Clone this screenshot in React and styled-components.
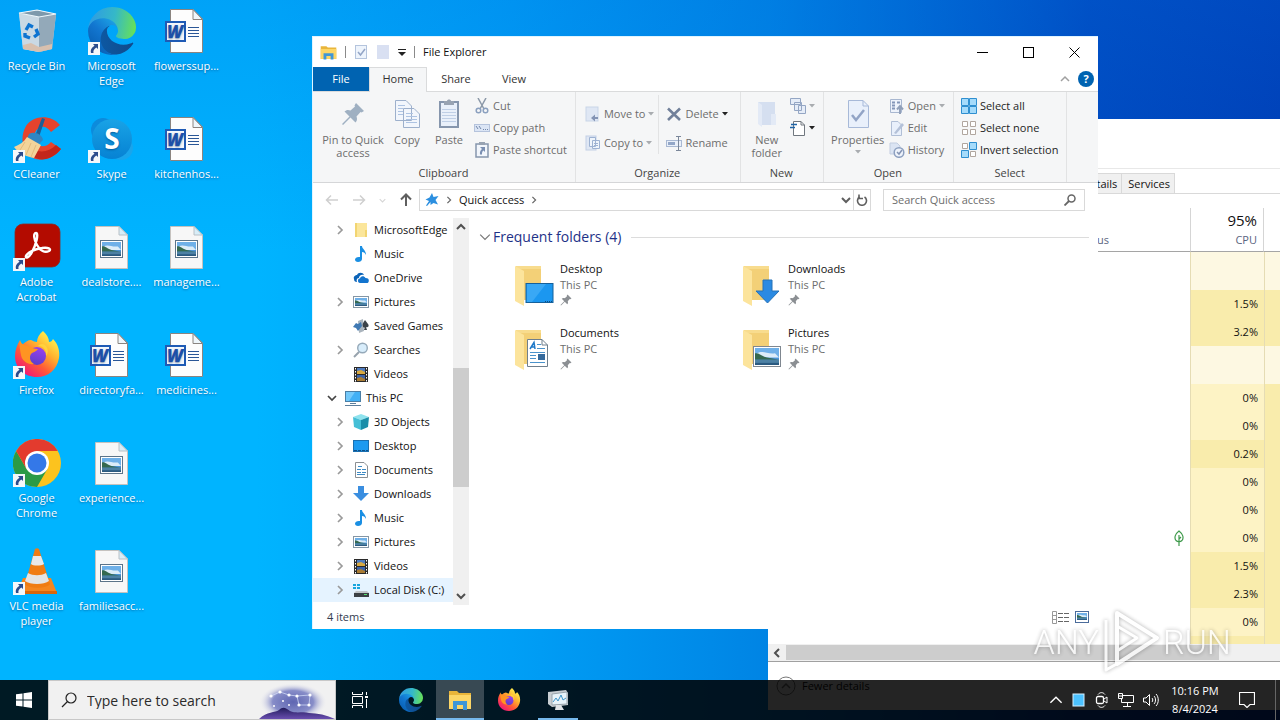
import { useState } from "react";
import styled, { createGlobalStyle } from "styled-components";

/* ---------- drawings ---------- */

const EdgeIcon = ({ size = 48 }) => (
  <svg width={size} height={size} viewBox="0 0 256 256">
    <defs>
      <linearGradient id="edgeA" x1="60" y1="177" x2="241" y2="177" gradientUnits="userSpaceOnUse">
        <stop offset="0" stopColor="#0c59a4" />
        <stop offset="1" stopColor="#114a8b" />
      </linearGradient>
      <linearGradient id="edgeB" x1="157" y1="100" x2="46" y2="222" gradientUnits="userSpaceOnUse">
        <stop offset="0" stopColor="#1b9de2" />
        <stop offset="0.5" stopColor="#1276d0" />
        <stop offset="1" stopColor="#0a63b8" />
      </linearGradient>
      <linearGradient id="edgeC" x1="20" y1="70" x2="250" y2="110" gradientUnits="userSpaceOnUse">
        <stop offset="0" stopColor="#2f9fe0" />
        <stop offset="0.5" stopColor="#35b8c8" />
        <stop offset="1" stopColor="#66e05a" />
      </linearGradient>
    </defs>
    <path
      fill="url(#edgeA)"
      d="M235.68 190.46a93.73 93.73 0 0 1-10.54 4.71 101.87 101.87 0 0 1-35.9 6.46c-47.32 0-88.54-32.55-88.54-74.32A31.48 31.48 0 0 1 117.13 99.8c-42.8 1.8-53.8 46.4-53.8 72.53 0 73.88 68.09 81.37 82.76 81.37 7.91 0 19.84-2.3 27-4.56l1.31-.44a128.34 128.34 0 0 0 66.6-52.8 4 4 0 0 0-5.32-5.44z"
    />
    <path
      fill="url(#edgeB)"
      d="M105.73 241.42a79.2 79.2 0 0 1-22.74-21.34 80.72 80.72 0 0 1 29.53-120c3.12-1.47 8.45-4.13 15.54-4a32.35 32.35 0 0 1 25.69 13 31.88 31.88 0 0 1 6.36 18.66c0-.21 24.46-79.6-80-79.6-43.9 0-80 41.66-80 78.21a130.15 130.15 0 0 0 12.11 56 128 128 0 0 0 156.38 67.11 75.55 75.55 0 0 1-62.78-8z"
    />
    <path
      fill="url(#edgeC)"
      d="M152.33 148.86c-.81 1.05-3.3 2.5-3.3 5.66 0 2.61 1.7 5.12 4.72 7.23 14.38 10 41.49 8.68 41.56 8.68a59.56 59.56 0 0 0 30.27-8.35A61.38 61.38 0 0 0 256 109.19c.26-22.41-8-37.31-11.34-43.91C223.46 23.84 177.72 0 128 0A128 128 0 0 0 0 126.2c.48-36.54 36.8-66.05 80-66.05 3.5 0 23.46.34 42 10.07 16.34 8.58 24.9 18.94 30.85 29.21 6.18 10.67 7.28 24.15 7.28 29.52s-2.74 13.33-7.8 19.91z"
    />
  </svg>
);

const RecycleIcon = () => (
  <svg width="48" height="48" viewBox="0 0 48 48">
    <path d="M6 6 L24 3 L43 7 L39 42 L26 45 L10 42 Z" fill="#b9cfdd" />
    <path d="M6 6 L26 10 L26 45 L10 42 Z" fill="#c9d9e4" />
    <path d="M26 10 L43 7 L39 42 L26 45 Z" fill="#93a9b9" />
    <path d="M6 6 L24 3 L43 7 L26 10 Z" fill="#7d99ac" stroke="#eef7fc" strokeWidth="1.2" />
    <path d="M10 38 L18 36 L26 40 L39 37 L39 42 L26 45 L10 42 Z" fill="#d8c0ae" />
    <g fill="none" stroke="#0d74d1" strokeWidth="3.4">
      <path d="M13 23 L16 18 L20 20" />
      <path d="M23 22 L25 27 L21 30" />
      <path d="M17 31 L12 29 L12 26" />
    </g>
  </svg>
);

const CCleanerIcon = () => (
  <svg width="48" height="48" viewBox="0 0 48 48">
    <path
      d="M47 10 C38 -1 20 0 13 11 C6 23 10 38 20 43 C30 47 41 43 48 34 L38 27 C34 32 27 33 23 28 C19 22 22 14 28 12 C32 11 35 13 38 17 Z"
      fill="#e5432d"
    />
    <path d="M13 30 C16 41 24 46 33 44 C40 42 45 38 48 34 L43 30 C35 38 24 39 13 30 Z" fill="#c3261b" />
    <path d="M29 3 L32 4 L26 22 L22 21 Z" fill="#1d5f97" />
    <path d="M16 19 C21 16 29 19 30 25 L26 29 L14 24 Z" fill="#2f86c4" />
    <path d="M14 22 L28 30 L21 43 C15 42 6 39 1 32 C6 30 11 27 14 22 Z" fill="#f3d49a" />
    <path d="M12 27 L7 35 M18 28 L13 40 M23 30 L18 42" stroke="#e3bb7c" strokeWidth="1" />
  </svg>
);

const SkypeIcon = () => (
  <svg width="48" height="48" viewBox="0 0 48 48">
    <defs>
      <linearGradient id="skypeG" x1="0" y1="0" x2="0" y2="1">
        <stop offset="0" stopColor="#19a3e6" />
        <stop offset="1" stopColor="#0682d3" />
      </linearGradient>
    </defs>
    <circle cx="15" cy="15" r="12" fill="#0c8bdc" />
    <circle cx="33" cy="33" r="12" fill="#19a5ec" />
    <circle cx="24" cy="24" r="20" fill="url(#skypeG)" />
    <text x="24" y="34" textAnchor="middle" fontFamily="Open Sans" fontWeight="700" fontSize="28" fill="#fff">
      S
    </text>
  </svg>
);

const AcrobatIcon = () => (
  <svg width="48" height="48" viewBox="0 0 48 48">
    <rect x="2" y="1" width="45" height="43" rx="8" fill="#b30b00" stroke="#8a2a25" strokeWidth="0.8" />
    <path
      d="M23 10 C20 10 21 17 24 22 C27 28 32 30 36 28 C39 26 35 24 29 25 C21 26 14 30 13 33 C12 36 16 35 19 29 C23 22 26 10 23 10 Z"
      fill="none"
      stroke="#fff"
      strokeWidth="2.4"
      strokeLinejoin="round"
    />
  </svg>
);

const FirefoxIcon = ({ size = 48, id = "a" }) => (
  <svg width={size} height={size} viewBox="0 0 48 48">
    <defs>
      <linearGradient id={"ffBody" + id} x1="0.85" y1="0.1" x2="0.2" y2="0.95">
        <stop offset="0" stopColor="#fff44f" />
        <stop offset="0.35" stopColor="#ffb02e" />
        <stop offset="0.65" stopColor="#ff5a36" />
        <stop offset="1" stopColor="#f0157a" />
      </linearGradient>
      <linearGradient id={"ffCore" + id} x1="0.6" y1="0" x2="0.3" y2="1">
        <stop offset="0" stopColor="#9a3ff0" />
        <stop offset="1" stopColor="#5a3ec8" />
      </linearGradient>
    </defs>
    <path
      d="M30 0 C34 4 36 7 36 11 C38 11 39 10 40 8 C45 13 47 20 46 27 C44 39 35 46 24 46 C11 46 2 37 2 25 C2 19 4 14 7 9 C7 12 8 13 9 14 C12 11 15 9 18 9 C20 10 22 11 24 11 C24 7 26 3 30 0 Z"
      fill={`url(#ffBody${id})`}
    />
    <circle cx="24" cy="25" r="9" fill={`url(#ffCore${id})`} />
    <path
      d="M7 9 C8 13 11 14 15 15 C18 16 21 18 25 18 C23 21 20 21 18 23 C16 26 17 31 21 33 C15 34 9 30 8 24 C7 19 6 14 7 9 Z"
      fill="#ff9422"
    />
    <path d="M25 15 C31 15 34 20 33 25 C36 22 35 16 32 14 C29 12 27 13 25 15 Z" fill="#ffd23c" />
  </svg>
);

const ChromeIcon = () => (
  <svg width="48" height="48" viewBox="0 0 48 48">
    <circle cx="24" cy="24" r="24" fill="#fcc31e" />
    <path d="M3.2 12 L13.6 30 L24 36 L34.4 30 L24 48 A24 24 0 0 1 3.2 12 Z" fill="#2b9a47" />
    <path d="M3.2 12 A24 24 0 0 1 44.8 12 L24 12 L13.6 30 Z" fill="#e33b2e" />
    <circle cx="24" cy="24" r="12" fill="#fff" />
    <circle cx="24" cy="24" r="9.5" fill="#3478e8" />
  </svg>
);

const VlcIcon = () => (
  <svg width="48" height="48" viewBox="0 0 48 48">
    <path d="M10 31 L38 31 L44 46 L4 46 Z" fill="#f5861f" />
    <path d="M4 44 L44 44 L44 47 L4 47 Z" fill="#d9660a" />
    <path d="M22 2 C23 1 25 1 26 2 L37 37 C34 42 15 42 12 37 Z" fill="#f07c13" />
    <path d="M20 9 L28 9 L31 17 C28 19 20 19 18 17 Z" fill="#e9e9e9" />
    <path d="M15 26 C20 29 28 29 33 26 L36 34 C31 38 17 38 12 34 Z" fill="#e4e4e4" />
  </svg>
);

const WordFileIcon = () => (
  <svg width="48" height="48" viewBox="2 0 48 48">
    <path d="M9.5 2.5 H32 L41.5 12 V45.5 H9.5 Z" fill="#fdfdfd" stroke="#8a8480" />
    <path d="M32 2.5 V12.5 H41.5 Z" fill="#eef6fb" stroke="#8a8480" />
    <path d="M27 20.5 H38 M27 23.5 H38 M27 26.5 H38 M27 29.5 H38" stroke="#2b5797" />
    <rect x="4" y="14" width="21" height="21" fill="#1f5bb5" />
    <rect x="6" y="16" width="17" height="17" fill="#f3f7fc" />
    <text
      x="14"
      y="31"
      textAnchor="middle"
      fontFamily="Open Sans"
      fontStyle="italic"
      fontWeight="800"
      fontSize="17"
      fill="#1d4fa8"
    >
      W
    </text>
  </svg>
);

const Scene = ({ x, y, w, h }) => (
  <svg x={x} y={y} width={w} height={h} viewBox="0 0 24 16" preserveAspectRatio="none">
    <rect width="24" height="16" fill="#4b93d8" />
    <path d="M0 0 H24 V9 H0 Z" fill="#6fb0e8" />
    <path d="M2 5 C8 2 12 6 20 5 L24 9 H0 Z" fill="#dcecf8" />
    <path d="M0 5 C4 4 7 8 12 9 L24 11 H0 Z" fill="#35694f" />
    <path d="M0 11 H24 V16 H0 Z" fill="#4d81a4" />
    <path d="M0 14 H24 V16 H0 Z" fill="#2b5a80" />
  </svg>
);

const ImageFileIcon = () => (
  <svg width="48" height="48" viewBox="2 0 48 48">
    <path d="M9.5 3.5 H33 L41.5 12 V45.5 H9.5 Z" fill="#f7f7f7" stroke="#c5c2bf" />
    <path d="M33 3.5 V12 H41.5 Z" fill="#d8edf7" stroke="#b9c0c6" />
    <rect x="14.5" y="17.5" width="22" height="17" fill="#fff" stroke="#5c7489" />
    <Scene x="16" y="19" w="19" h="14" />
  </svg>
);

const ShortcutArrow = () => (
  <svg width="12" height="13" viewBox="0 0 12 13">
    <rect width="12" height="13" fill="#f4f7fa" />
    <path d="M5 2 H10 V7 L8.3 5.5 C6 7 5 8.5 5.5 11 H3 C2 8 3.5 5.5 6.5 3.7 Z" fill="#2c4c8c" />
  </svg>
);

const PictureGlyph = () => (
  <svg width="16" height="16" viewBox="0 0 16 16">
    <rect x="0.5" y="2.5" width="15" height="11" fill="#fff" stroke="#8496a5" />
    <Scene x="2" y="4" w="12" h="8" />
  </svg>
);

const treeGlyphs = {
  folder: (
    <svg width="16" height="16" viewBox="0 0 16 16">
      <path d="M2 1 H14 V15 H2 Z" fill="#fbe69b" />
      <path d="M2 1 H4 V15 H2 Z M12 8 H14 V15 H12 Z" fill="#f2d572" />
    </svg>
  ),
  music: (
    <svg width="16" height="16" viewBox="0 0 16 16">
      <path d="M7 0 H9 C9 3 13 4 13 9 C12 7 11 6 9 6 V13 C9 15 7 16 5 16 C3 16 2 15 2 13.5 C2 12 4 10.5 7 11 Z" fill="#1a8fe3" />
    </svg>
  ),
  onedrive: (
    <svg width="16" height="16" viewBox="0 0 16 16">
      <path d="M1 9 C0 6 3 5 4 5 C5 2 10 2 11 5 C8 4 6 6 6 8 C4 8 3 10 4 12 C2 12 1 11 1 9 Z" fill="#0b63b8" />
      <path d="M5 10.5 C5 9 6 8.5 7 8.5 C7 6 11 5 12.5 8 C15 8 16 9 15.8 11 C15.5 12.5 15 13 14 13 H7 C5.5 13 5 12 5 10.5 Z" fill="#1374ce" />
    </svg>
  ),
  pictures: <PictureGlyph />,
  games: (
    <svg width="16" height="16" viewBox="0 0 16 16">
      <path d="M5 3 L10 1 L11 13 L6 15 Z" fill="#aab4bd" />
      <path d="M12 2 C10 5 9 6 10 9 C11 10 12 10 12 9 L11 12 H14 L13 9 C16 10 16 7 15 6 Z" fill="#3b4249" />
      <path d="M0 9 L3 5 L5 6 L8 4 L9 8 L5 13 L3 10 Z" fill="#4079b3" />
    </svg>
  ),
  search: (
    <svg width="16" height="16" viewBox="0 0 16 16">
      <path d="M6 10 L1 15" stroke="#98a3ad" strokeWidth="2" />
      <circle cx="9.5" cy="6" r="4.8" fill="#d8edfb" stroke="#95a9b9" strokeWidth="1.4" />
    </svg>
  ),
  videos: (
    <svg width="16" height="16" viewBox="0 0 16 16">
      <rect x="1" y="1" width="14" height="15" fill="#2a2a2a" />
      <rect x="4" y="2" width="8" height="6" fill="#4f7cc0" />
      <path d="M4 5 L8 4 L12 6 V8 H4 Z" fill="#d8a941" />
      <rect x="4" y="9" width="8" height="6" fill="#3b62a8" />
      <path d="M4 12 L8 11 L12 13 V15 H4 Z" fill="#a97c34" />
      <path d="M2.5 2 V16 M13.5 2 V16" stroke="#fff" strokeDasharray="1.5 1.5" />
    </svg>
  ),
  pc: (
    <svg width="16" height="16" viewBox="0 0 16 16">
      <rect x="0.5" y="1.5" width="15" height="10" fill="#42b0f5" stroke="#4a7ea5" />
      <path d="M1 2 H10 L4 11 H1 Z" fill="#74c9fa" />
      <path d="M5 13.5 H11 M0 15.5 H16" stroke="#5d7f9c" />
    </svg>
  ),
  cube: (
    <svg width="16" height="16" viewBox="0 0 16 16">
      <path d="M0 3 L8 0 L16 3 L8 6 Z" fill="#8fe3ee" />
      <path d="M0 3 L8 6 V16 L1 13 Z" fill="#45bfd6" />
      <path d="M16 3 L8 6 V16 L15 13 Z" fill="#1a8ea9" />
    </svg>
  ),
  desktop: (
    <svg width="16" height="16" viewBox="0 0 16 16">
      <rect x="0.5" y="2.5" width="15" height="11" fill="#1d9af0" stroke="#1a6fb0" />
      <path d="M1 12.5 H15" stroke="#0f4f86" strokeDasharray="3 1" />
    </svg>
  ),
  document: (
    <svg width="16" height="16" viewBox="0 0 16 16">
      <path d="M2.5 0.5 H11 L14.5 4 V15.5 H2.5 Z" fill="#fff" stroke="#8b8f93" />
      <path d="M5 4.5 H9 M4 7.5 H8 M9 7.5 H13 M4 10.5 H8 M9 10.5 H13 M4 12.5 H12" stroke="#3d8ac4" />
    </svg>
  ),
  download: (
    <svg width="16" height="16" viewBox="0 0 16 16">
      <path d="M5 0 H11 V7 H16 L8 15 L0 7 H5 Z" fill="#3a8ee0" />
    </svg>
  ),
  disk: (
    <svg width="16" height="16" viewBox="0 0 16 16">
      <path d="M0 2 H3 V4 H0 Z M4 2 H7 V4 H4 Z M0 5 H3 V7 H0 Z M4 5 H7 V7 H4 Z" fill="#18a5dd" />
      <path d="M3 9 H14 L16 11 H1 Z" fill="#c0c5c9" />
      <rect x="1" y="11" width="15" height="4" fill="#3c4145" />
      <rect x="11" y="12" width="3" height="1" fill="#58e070" />
    </svg>
  ),
};

const PinGlyph = ({ size = 12, color = "#8b8f93" }) => (
  <svg width={size} height={size} viewBox="0 0 24 24">
    <path
      d="M15 1 L23 9 L20.5 10.5 L19.5 10 L15.5 14.5 C16.5 17 16 19 14.5 20.5 L9.5 15.5 L2 23 L1 22 L8.5 14.5 L3.5 9.5 C5 8 7 7.5 9.5 8.5 L14 4.5 L13.5 3.5 Z"
      fill={color}
    />
  </svg>
);

const BigFolder = ({ kind }) => (
  <svg width="40" height="40" viewBox="0 0 40 40">
    <path d="M2 0 H27 V34 H10 Z" fill="#f3d077" />
    <path d="M2 0 H27 V3 H4 Z" fill="#f8dc8e" />
    <path d="M1 0 L10 5 V40 L1 35 Z" fill="#fce49c" />
    {kind === "desktop" && (
      <>
        <rect x="12" y="17.5" width="27" height="19" fill="#1b97f0" stroke="#15609b" />
        <path d="M13 18 H32 L18 36 H13 Z" fill="#39a8f5" />
        <path d="M31 35.5 H38" stroke="#0d4c82" strokeDasharray="1 1" />
      </>
    )}
    {kind === "download" && <path d="M21 14 H30 V25 H37 L25.5 37 L14 25 H21 Z" fill="#2b8ae2" stroke="#2672b8" />}
    {kind === "document" && (
      <>
        <path d="M13.5 9.5 H28 L33.5 15 V36.5 H13.5 Z" fill="#fff" stroke="#6f7f8c" />
        <path d="M28 9.5 V15 H33.5" fill="none" stroke="#6f7f8c" />
        <path d="M16 19 L20 12.5 L21 19 M17 17 H21" fill="none" stroke="#1e78c8" strokeWidth="1.5" />
        <path d="M23 14.5 H27 M23 18.5 H31 M16 22.5 H31 M16 25.5 H22 M16 28.5 H22 M16 32.5 H31" stroke="#4a93cc" />
        <rect x="24" y="24" width="7" height="6" fill="#356a9c" />
      </>
    )}
    {kind === "pictures" && (
      <>
        <rect x="11.5" y="16.5" width="27" height="20" fill="#fff" stroke="#7f8790" />
        <Scene x="13" y="18" w="24" h="17" />
      </>
    )}
  </svg>
);

const ExplorerIcon = ({ size }) => (
  <svg width={size} height={size} viewBox="0 0 24 24">
    <path d="M1 3 H9 L11 5 H23 V21 H1 Z" fill="#e9b53a" />
    <path d="M1 7 H23 V21 H1 Z" fill="#fcd667" />
    <path d="M5 13 H19 V22 H15 V17 H9 V22 H5 Z" fill="#3f96d6" />
  </svg>
);

/* ribbon drawings are washed out since most commands are off */
const ribbonGlyphs = {
  pin: <PinGlyph size={24} color="#9fb0c2" />,
  copy: (
    <svg width="26" height="30" viewBox="0 0 26 30">
      <path d="M1.5 1.5 H12 L17.5 7 V21.5 H1.5 Z M9.5 9.5 H20 L25.5 15 V28.5 H9.5 Z" fill="#f2f6fc" stroke="#9db0cc" />
      <path d="M4 6.5 H11 M4 9.5 H9 M4 12.5 H9 M4 15.5 H9 M12 14.5 H19 M12 17.5 H23 M12 20.5 H23 M12 23.5 H23" stroke="#adc3e2" />
    </svg>
  ),
  paste: (
    <svg width="24" height="30" viewBox="0 0 24 30">
      <rect x="3" y="3" width="18" height="25" fill="#e9f0fa" stroke="#8696ad" strokeWidth="2" />
      <path d="M7 2 H10 C10 0 14 0 14 2 H17 V6 H7 Z" fill="#98a3b2" />
      <path d="M5 10.5 H19 M5 13.5 H19 M5 16.5 H19 M5 19.5 H19 M5 22.5 H19" stroke="#bfcfe6" />
    </svg>
  ),
  cut: (
    <svg width="16" height="16" viewBox="0 0 16 16">
      <path d="M4 0 L10 11 M12 0 L6 11" stroke="#8b98a8" strokeWidth="1.5" />
      <circle cx="4.5" cy="12.5" r="2.3" fill="none" stroke="#8ba0bf" strokeWidth="1.5" />
      <circle cx="11.5" cy="12.5" r="2.3" fill="none" stroke="#8ba0bf" strokeWidth="1.5" />
    </svg>
  ),
  path: (
    <svg width="16" height="16" viewBox="0 0 16 16">
      <rect x="0.5" y="4.5" width="15" height="7" fill="#dbe5f5" stroke="#b5c3dc" />
      <path d="M2 6 L4 9 M5 6 L7 9" stroke="#7387ab" />
      <path d="M9 9.5 H14" stroke="#7387ab" strokeDasharray="1 1" />
    </svg>
  ),
  shortcut: (
    <svg width="16" height="16" viewBox="0 0 16 16">
      <rect x="2" y="2" width="12" height="13" fill="#f2f6fc" stroke="#8696ad" strokeWidth="1.5" />
      <rect x="5" y="0" width="6" height="3" fill="#98a3b2" />
      <path d="M6 5 H11 V10 L9.5 8.5 C8 9.5 8 11 8 12.5 H6 C5.5 10 6.5 8 8 7 Z" fill="#7a8fb2" />
    </svg>
  ),
  moveTo: (
    <svg width="16" height="16" viewBox="0 0 16 16">
      <rect x="1" y="1" width="12" height="14" fill="#dfe7f4" stroke="#c9d5e8" />
      <path d="M6 12 L10 8.5 V11 H13 V13 H10 V15.5 Z" fill="#8494b4" />
    </svg>
  ),
  copyTo: (
    <svg width="16" height="16" viewBox="0 0 16 16">
      <rect x="1" y="1" width="10" height="14" fill="#dfe7f4" stroke="#c3d0e5" />
      <path d="M4.5 2.5 H10.5 V11.5 H4.5 Z M7.5 5.5 H14.5 V13.5 H7.5 Z" fill="#eef4fb" stroke="#9db2d2" />
      <path d="M9 8.5 H13 M9 10.5 H13" stroke="#9db2d2" />
    </svg>
  ),
  delete: (
    <svg width="16" height="16" viewBox="0 0 16 16">
      <path d="M2 2.5 L14 14 M14 2.5 L2 14" stroke="#71809a" strokeWidth="2.6" />
    </svg>
  ),
  rename: (
    <svg width="16" height="16" viewBox="0 0 16 16">
      <rect x="0.5" y="5.5" width="15" height="6" fill="#eaf0fa" stroke="#a9b9d3" />
      <rect x="2" y="7" width="7" height="3" fill="#93a7c8" />
      <path d="M10 1.5 H15 M10 15.5 H15 M12.5 1.5 V15.5" stroke="#7b879a" />
    </svg>
  ),
  newFolder: (
    <svg width="24" height="30" viewBox="0 0 24 30">
      <path d="M3 3 H20 V26 H7 Z" fill="#d5dff0" />
      <path d="M3 3 L7 6 V28 L3 25 Z" fill="#e3eaf6" />
      <path d="M16 15 H21 V26 H16 Z" fill="#e3eaf6" />
    </svg>
  ),
  newItem: (
    <svg width="16" height="16" viewBox="0 0 16 16">
      <path d="M0.5 0.5 H10.5 V6.5 H0.5 Z M4.5 4.5 H11.5 V12.5 H4.5 Z M8.5 7.5 H15.5 V15.5 H8.5 Z" fill="#e6edf8" stroke="#94a6c4" />
    </svg>
  ),
  easy: (
    <svg width="16" height="16" viewBox="0 0 16 16">
      <path d="M3.5 1.5 H11 L14.5 5 V15.5 H3.5 Z" fill="#fff" stroke="#70777f" />
      <path d="M11 1.5 V5 H14.5" fill="none" stroke="#70777f" />
      <path d="M1 4.5 H7 M0 7.5 H5" stroke="#2066a8" strokeWidth="1.5" />
    </svg>
  ),
  properties: (
    <svg width="24" height="30" viewBox="0 0 24 30">
      <path d="M2.5 1.5 H17 L22.5 7 V28.5 H2.5 Z" fill="#e9f0fb" stroke="#a7b9d8" />
      <path d="M17 1.5 V7 H22.5" fill="none" stroke="#a7b9d8" />
      <path d="M6 16 L10 21 L18 11" fill="none" stroke="#92a4c6" strokeWidth="2.5" />
    </svg>
  ),
  open: (
    <svg width="16" height="16" viewBox="0 0 16 16">
      <path d="M1.5 1.5 H12.5 V14.5 H1.5 Z" fill="#eef3fb" stroke="#a8b7d0" />
      <path d="M3 4.5 H6 M3 7.5 H6 M3 10.5 H6 M8 4.5 H11" stroke="#8396b8" strokeWidth="2" />
      <path d="M11 16 V9 M8 11.5 L11 8 L14 11.5" fill="none" stroke="#91a0b9" strokeWidth="2" />
    </svg>
  ),
  edit: (
    <svg width="16" height="16" viewBox="0 0 16 16">
      <path d="M2.5 1.5 H9 L12.5 5 V15.5 H2.5 Z" fill="#e9f0fb" stroke="#b1bfd6" />
      <path d="M5 13 L13 3 L15 5 L7 14 Z" fill="#b4c1d8" />
    </svg>
  ),
  history: (
    <svg width="16" height="16" viewBox="0 0 16 16">
      <path d="M1 1 H8 L11 4 V12 H1 Z" fill="#dbe4f3" stroke="#c2cde0" />
      <circle cx="10" cy="10.5" r="4.8" fill="#eef3fb" stroke="#8da0c0" strokeWidth="1.5" />
      <path d="M8 10 L10 12 L13 8" fill="none" stroke="#8494b4" strokeWidth="1.5" />
    </svg>
  ),
  all: (
    <svg width="16" height="16" viewBox="0 0 16 16">
      <path d="M0.5 0.5 H7.5 V7.5 H0.5 Z M8.5 0.5 H15.5 V7.5 H8.5 Z M0.5 8.5 H7.5 V15.5 H0.5 Z M8.5 8.5 H15.5 V15.5 H8.5 Z" fill="#a5dbfb" stroke="#2f8fd0" />
    </svg>
  ),
  none: (
    <svg width="16" height="16" viewBox="0 0 16 16">
      <path d="M1.5 1.5 H6.5 V6.5 H1.5 Z M9.5 1.5 H14.5 V6.5 H9.5 Z M1.5 9.5 H6.5 V14.5 H1.5 Z M9.5 9.5 H14.5 V14.5 H9.5 Z" fill="#fff" stroke="#b0a69f" />
    </svg>
  ),
  invert: (
    <svg width="16" height="16" viewBox="0 0 16 16">
      <path d="M1.5 1.5 H6.5 V6.5 H1.5 Z M9.5 9.5 H14.5 V14.5 H9.5 Z" fill="#fff" stroke="#b0a69f" />
      <path d="M8.5 0.5 H15.5 V7.5 H8.5 Z M0.5 8.5 H7.5 V15.5 H0.5 Z" fill="#a5dbfb" stroke="#2f8fd0" />
    </svg>
  ),
};

const Chevron = ({ dir = "right", color = "#8c8c8c", size = 10, weight = 1.5 }) => {
  const paths = {
    right: "M3 1 L7 5 L3 9",
    down: "M1 3 L5 7 L9 3",
    up: "M1 7 L5 3 L9 7",
    left: "M7 1 L3 5 L7 9",
  };
  return (
    <svg width={size} height={size} viewBox="0 0 10 10">
      <path d={paths[dir]} fill="none" stroke={color} strokeWidth={weight} />
    </svg>
  );
};

const Caret = ({ color = "#a9acb0" }) => (
  <svg width="6" height="4" viewBox="0 0 6 4">
    <path d="M0 0 H6 L3 3.5 Z" fill={color} />
  </svg>
);

const Arrow = ({ dir, color }) => (
  <svg width="14" height="14" viewBox="0 0 14 14">
    {dir === "left" && <path d="M13 7 H2 M6 2.5 L1.5 7 L6 11.5" fill="none" stroke={color} strokeWidth="1.5" />}
    {dir === "right" && <path d="M1 7 H12 M8 2.5 L12.5 7 L8 11.5" fill="none" stroke={color} strokeWidth="1.5" />}
    {dir === "up" && <path d="M7 13 V2 M2 6.5 L7 1.5 L12 6.5" fill="none" stroke={color} strokeWidth="2" />}
  </svg>
);

/* ---------- data ---------- */

const desktopItems = [
  { name: "Recycle Bin", icon: <RecycleIcon /> },
  { name: "CCleaner", icon: <CCleanerIcon />, link: true },
  { name: "Adobe Acrobat", icon: <AcrobatIcon />, link: true },
  { name: "Firefox", icon: <FirefoxIcon />, link: true },
  { name: "Google Chrome", icon: <ChromeIcon />, link: true },
  { name: "VLC media player", icon: <VlcIcon />, link: true },
  { name: "Microsoft Edge", icon: <EdgeIcon />, link: true },
  { name: "Skype", icon: <SkypeIcon />, link: true },
  { name: "dealstore....", icon: <ImageFileIcon /> },
  { name: "directoryfa...", icon: <WordFileIcon /> },
  { name: "experience...", icon: <ImageFileIcon /> },
  { name: "familiesacc...", icon: <ImageFileIcon /> },
  { name: "flowerssup...", icon: <WordFileIcon /> },
  { name: "kitchenhos...", icon: <WordFileIcon /> },
  { name: "manageme...", icon: <ImageFileIcon /> },
  { name: "medicines...", icon: <WordFileIcon /> },
];

const treeItems = [
  { name: "MicrosoftEdge", icon: "folder", arrow: true },
  { name: "Music", icon: "music" },
  { name: "OneDrive", icon: "onedrive" },
  { name: "Pictures", icon: "pictures", arrow: true },
  { name: "Saved Games", icon: "games" },
  { name: "Searches", icon: "search", arrow: true },
  { name: "Videos", icon: "videos" },
  { name: "This PC", icon: "pc", arrow: true, root: true },
  { name: "3D Objects", icon: "cube", arrow: true },
  { name: "Desktop", icon: "desktop", arrow: true },
  { name: "Documents", icon: "document", arrow: true },
  { name: "Downloads", icon: "download", arrow: true },
  { name: "Music", icon: "music", arrow: true },
  { name: "Pictures", icon: "pictures", arrow: true },
  { name: "Videos", icon: "videos", arrow: true },
  { name: "Local Disk (C:)", icon: "disk", arrow: true, active: true },
];

const folders = [
  { name: "Desktop", kind: "desktop" },
  { name: "Downloads", kind: "download" },
  { name: "Documents", kind: "document" },
  { name: "Pictures", kind: "pictures" },
];

const processes = [
  { group: true },
  { cpu: "1.5%", hot: true },
  { cpu: "3.2%", hot: true },
  { group: true },
  { cpu: "0%" },
  { cpu: "0%" },
  { cpu: "0.2%", hot: true },
  { cpu: "0%" },
  { cpu: "0%" },
  { cpu: "0%", leaf: true },
  { cpu: "1.5%", hot: true },
  { cpu: "2.3%", hot: true },
  { cpu: "0%" },
  { cpu: "", hot: true, icon: true },
];

/* ---------- parts ---------- */

const Small = ({ icon, children, caret, on }) => (
  <SmallCommand type="button" $on={on}>
    {ribbonGlyphs[icon]}
    {children}
    {caret && <Caret color={caret === "dark" ? "#222" : undefined} />}
  </SmallCommand>
);

const Big = ({ icon, children, width, caret }) => (
  <BigCommand type="button" $width={width}>
    <BigGlyph>{ribbonGlyphs[icon]}</BigGlyph>
    {children}
    {caret && <Caret />}
  </BigCommand>
);

function Explorer() {
  const [query, setQuery] = useState("");

  return (
    <ExplorerWindow>
      <TitleBar>
        <ExplorerIcon size={17} />
        <Divider />
        <svg width="14" height="16" viewBox="0 0 14 16">
          <rect x="1.5" y="1.5" width="11" height="13" fill="#eef4fc" stroke="#b4c4dd" />
          <path d="M4 8 L6.5 11 L11 5" fill="none" stroke="#93a5c6" strokeWidth="1.5" />
        </svg>
        <svg width="14" height="16" viewBox="0 0 14 16">
          <rect x="1" y="1" width="12" height="14" fill="#d9e0f2" />
        </svg>
        <svg width="8" height="8" viewBox="0 0 8 8">
          <path d="M0 1.5 H8" stroke="#222" />
          <path d="M0 4 H8 L4 8 Z" fill="#222" />
        </svg>
        <Divider />
        <Title>File Explorer</Title>
        <WindowButton type="button" aria-label="Minimize">
          <svg width="11" height="11" viewBox="0 0 11 11">
            <path d="M0 5.5 H11" stroke="#000" />
          </svg>
        </WindowButton>
        <WindowButton type="button" aria-label="Maximize">
          <svg width="11" height="11" viewBox="0 0 11 11">
            <rect x="0.5" y="0.5" width="10" height="10" fill="none" stroke="#000" />
          </svg>
        </WindowButton>
        <WindowButton type="button" aria-label="Close">
          <svg width="11" height="11" viewBox="0 0 11 11">
            <path d="M0.5 0.5 L10.5 10.5 M10.5 0.5 L0.5 10.5" stroke="#000" />
          </svg>
        </WindowButton>
      </TitleBar>

      <RibbonTabs>
        <FileTab type="button">File</FileTab>
        <RibbonTab type="button" $active>
          Home
        </RibbonTab>
        <RibbonTab type="button">Share</RibbonTab>
        <RibbonTab type="button">View</RibbonTab>
        <TabTools>
          <Chevron dir="up" color="#a0a0a0" />
          <HelpButton type="button">?</HelpButton>
        </TabTools>
      </RibbonTabs>

      <Ribbon>
        <Group>
          <GroupBody>
            <Big icon="pin" width={66}>
              Pin to Quick access
            </Big>
            <Big icon="copy" width={42}>
              Copy
            </Big>
            <Big icon="paste" width={42}>
              Paste
            </Big>
            <CommandColumn>
              <Small icon="cut">Cut</Small>
              <Small icon="path">Copy path</Small>
              <Small icon="shortcut">Paste shortcut</Small>
            </CommandColumn>
          </GroupBody>
          <GroupLabel>Clipboard</GroupLabel>
        </Group>
        <Group>
          <GroupBody>
            <CommandColumn $loose>
              <Small icon="moveTo" caret>
                Move to
              </Small>
              <Small icon="copyTo" caret>
                Copy to
              </Small>
            </CommandColumn>
            <CommandColumn $loose $ruled>
              <Small icon="delete" caret="dark">
                Delete
              </Small>
              <Small icon="rename">Rename</Small>
            </CommandColumn>
          </GroupBody>
          <GroupLabel>Organize</GroupLabel>
        </Group>
        <Group>
          <GroupBody>
            <Big icon="newFolder" width={38}>
              New folder
            </Big>
            <CommandColumn>
              <Small icon="newItem" caret />
              <Small icon="easy" caret="dark" />
            </CommandColumn>
          </GroupBody>
          <GroupLabel>New</GroupLabel>
        </Group>
        <Group>
          <GroupBody>
            <Big icon="properties" width={54} caret>
              Properties
            </Big>
            <CommandColumn>
              <Small icon="open" caret>
                Open
              </Small>
              <Small icon="edit">Edit</Small>
              <Small icon="history">History</Small>
            </CommandColumn>
          </GroupBody>
          <GroupLabel>Open</GroupLabel>
        </Group>
        <Group>
          <GroupBody>
            <CommandColumn>
              <Small icon="all" on>
                Select all
              </Small>
              <Small icon="none" on>
                Select none
              </Small>
              <Small icon="invert" on>
                Invert selection
              </Small>
            </CommandColumn>
          </GroupBody>
          <GroupLabel>Select</GroupLabel>
        </Group>
      </Ribbon>

      <AddressRow>
        <NavButtons>
          <Arrow dir="left" color="#cfcfcf" />
          <Arrow dir="right" color="#cfcfcf" />
          <Chevron dir="down" color="#d5d5d5" size={7} />
          <Arrow dir="up" color="#5f5f5f" />
        </NavButtons>
        <AddressBox>
          <svg width="14" height="14" viewBox="0 0 14 14">
            <path d="M7 0 L8.5 4 L13.5 3 L10.5 7 L13 11.5 L8.5 10 L5.5 12 L5.5 9 L2 13 L1 12.5 L4 8 L0.5 6.5 L4.5 4.5 Z" fill="#2b8fe0" />
          </svg>
          <Chevron color="#666" size={8} />
          <Crumb href="#quick-access">Quick access</Crumb>
          <Chevron color="#666" size={8} />
          <AddressTools>
            <Chevron dir="down" color="#5f5f5f" weight={2} />
            <RefreshButton type="button" aria-label="Refresh">
              <svg width="12" height="12" viewBox="0 0 12 12">
                <path d="M3.5 3 A4.500 4.500 0 1 0 8.500 3" fill="none" stroke="#5f5f5f" strokeWidth="1.6" />
                <path d="M3 0.500 V4.500 H7" fill="none" stroke="#5f5f5f" strokeWidth="1.6" />
              </svg>
            </RefreshButton>
          </AddressTools>
        </AddressBox>
        <SearchBox>
          <SearchInput
            aria-label="Search Quick access"
            placeholder="Search Quick access"
            value={query}
            onChange={(e) => setQuery(e.target.value)}
          />
          <svg width="12" height="12" viewBox="0 0 12 12">
            <circle cx="7.5" cy="4.5" r="3.5" fill="none" stroke="#666" strokeWidth="1.5" />
            <path d="M5 7 L0.5 11.5" stroke="#666" strokeWidth="1.8" />
          </svg>
        </SearchBox>
      </AddressRow>

      <Body>
        <Tree>
          {treeItems.map((item, i) => (
            <TreeRow key={i} $root={item.root} $active={item.active}>
              <Expander>
                {item.arrow && (
                  <Chevron
                    dir={item.root ? "down" : "right"}
                    color={item.root ? "#444" : "#9a9a9a"}
                    weight={1.7}
                  />
                )}
              </Expander>
              {treeGlyphs[item.icon]}
              <span>{item.name}</span>
            </TreeRow>
          ))}
        </Tree>
        <TreeScroll>
          <Chevron dir="up" color="#505050" weight={2} />
          <TreeThumb />
          <Chevron dir="down" color="#505050" weight={2} />
        </TreeScroll>
        <Content>
          <SectionHead>
            <Chevron dir="down" color="#777" size={12} weight={1} />
            <h2>Frequent folders (4)</h2>
          </SectionHead>
          <FolderGrid>
            {folders.map((f) => (
              <Folder key={f.name}>
                <BigFolder kind={f.kind} />
                <FolderText>
                  <span>{f.name}</span>
                  <small>This PC</small>
                  <PinGlyph />
                </FolderText>
              </Folder>
            ))}
          </FolderGrid>
        </Content>
      </Body>

      <StatusBar>
        <span>4 items</span>
        <ViewModes>
          <svg width="17" height="13" viewBox="0 0 17 13">
            <path d="M0.5 0.5 H4.5 V12.5 H0.5 Z M0.5 4.5 H4.5 M0.5 8.5 H4.5" fill="none" stroke="#999" />
            <path d="M6 2.5 H17 M6 6.5 H17 M6 10.5 H17" stroke="#666" strokeDasharray="5 1" />
          </svg>
          <svg width="14" height="12" viewBox="0 0 14 12">
            <rect x="0.5" y="0.5" width="13" height="11" fill="#fff" stroke="#4b6c9b" />
            <Scene x="2" y="2" w="10" h="7" />
          </svg>
        </ViewModes>
      </StatusBar>
    </ExplorerWindow>
  );
}

function TaskManager() {
  return (
    <TaskWindow>
      <TaskTop />
      <TaskTabs>
        <TaskTab type="button">Details</TaskTab>
        <TaskTab type="button">Services</TaskTab>
      </TaskTabs>
      <TableArea>
        <ProcessTable>
          <colgroup>
            <col />
            <col width="118" />
            <col width="74" />
            <col width="16" />
          </colgroup>
          <thead>
            <tr>
              <th />
              <th>Status</th>
              <CpuHead>
                <strong>95%</strong>
                CPU
              </CpuHead>
              <th />
            </tr>
          </thead>
          <tbody>
            {processes.map((p, i) => (
              <ProcessRow key={i} $group={p.group}>
                <td>{p.icon && <ProcessIcon />}</td>
                <StatusCell>
                  {p.leaf && (
                    <svg width="10" height="16" viewBox="0 0 10 16">
                      <path d="M5 1 C9 4 10 8 8 10.5 C6.5 12 3.5 12 2 10.5 C0 8 1 4 5 1 Z" fill="none" stroke="#3f9a4c" strokeWidth="1.2" />
                      <path d="M5 5 V16 M5 9 L7 7" stroke="#3f9a4c" strokeWidth="1.2" />
                    </svg>
                  )}
                </StatusCell>
                <HeatCell $level={p.group ? 0 : p.hot ? 2 : 1}>{p.cpu}</HeatCell>
                <HeatCell $level={p.group ? 0 : 2} />
              </ProcessRow>
            ))}
          </tbody>
        </ProcessTable>
      </TableArea>
      <TaskScroll>
        <Chevron dir="left" color="#505050" weight={2} />
        <TaskThumb />
      </TaskScroll>
      <TaskFooter>
        <FewerButton type="button">
          <svg width="20" height="20" viewBox="0 0 20 20">
            <circle cx="10" cy="10" r="9" fill="none" stroke="#777" />
            <path d="M6 12 L10 8 L14 12" fill="none" stroke="#777" strokeWidth="1.5" />
          </svg>
          Fewer details
        </FewerButton>
      </TaskFooter>
    </TaskWindow>
  );
}

function Taskbar() {
  const [text, setText] = useState("");

  return (
    <Bar>
      <BarButton type="button" aria-label="Start">
        <svg width="16" height="16" viewBox="0 0 16 16">
          <path d="M0 2.3 L6.5 1.4 V7.5 H0 Z M7.5 1.2 L16 0 V7.5 H7.5 Z M0 8.5 H6.5 V14.6 L0 13.7 Z M7.5 8.5 H16 V16 L7.5 14.8 Z" fill="#fff" />
        </svg>
      </BarButton>
      <BarSearch>
        <svg width="16" height="16" viewBox="0 0 16 16">
          <circle cx="10" cy="6" r="5" fill="none" stroke="#222" strokeWidth="1.2" />
          <path d="M6.5 9.5 L1 15" stroke="#222" strokeWidth="1.2" />
        </svg>
        <BarInput
          aria-label="Type here to search"
          placeholder="Type here to search"
          value={text}
          onChange={(e) => setText(e.target.value)}
        />
        <svg width="78" height="38" viewBox="-2 0 78 38">
          <defs>
            <radialGradient id="nightSky">
              <stop offset="0" stopColor="#5f66b2" />
              <stop offset="0.6" stopColor="#878dc8" />
              <stop offset="1" stopColor="#f0f0f2" stopOpacity="0" />
            </radialGradient>
            <linearGradient id="hill" x1="0" y1="0" x2="0" y2="1">
              <stop offset="0" stopColor="#231c5c" />
              <stop offset="1" stopColor="#6a4fb0" />
            </linearGradient>
          </defs>
          <ellipse cx="34" cy="21" rx="34" ry="19" fill="url(#nightSky)" />
          <path d="M0 38 C8 30 16 32 20 29 C24 25 27 27 31 30 C38 33 44 30 50 32 C58 32 68 34 76 38 Z" fill="url(#hill)" />
          <path d="M12 15 L21 11 L30 14 L38 15 L51 14 L50 24 L40 24 L38 15" fill="none" stroke="#cdd7f5" strokeWidth="0.8" />
          <g fill="#fff">
            <circle cx="12" cy="15" r="1.6" />
            <circle cx="21" cy="11" r="1.6" />
            <circle cx="30" cy="14" r="1.6" />
            <circle cx="38" cy="15" r="1.6" />
            <circle cx="51" cy="14" r="1.6" />
            <circle cx="50" cy="24" r="1.6" />
            <circle cx="40" cy="24" r="1.6" />
            <circle cx="24" cy="20" r="1" />
            <circle cx="15" cy="25" r="1" />
            <circle cx="30" cy="24" r="1" />
          </g>
        </svg>
      </BarSearch>
      <BarButton type="button" aria-label="Task View">
        <svg width="16" height="16" viewBox="0 0 16 16">
          <path d="M0.5 0 V2.5 H10.5 V0 M0.5 16 V13.5 H10.5 V16 M0.5 4.5 H10.5 V11.5 H0.5 Z M14.5 0 V3 M14.5 7 V16" fill="none" stroke="#fff" />
          <rect x="13" y="4" width="3" height="2" fill="#fff" />
        </svg>
      </BarButton>
      <Pinned>
        <BarButton type="button" aria-label="Edge">
          <EdgeIcon size={24} />
        </BarButton>
        <BarButton type="button" aria-label="File Explorer" $active>
          <ExplorerIcon size={24} />
        </BarButton>
        <BarButton type="button" aria-label="Firefox">
          <FirefoxIcon size={24} id="b" />
        </BarButton>
        <RunningButton type="button" aria-label="Task Manager">
          <svg width="24" height="24" viewBox="0 0 24 24">
            <path d="M2 4 L20 2 L22 5 V17 L6 19 L2 16 Z" fill="#c8ced2" />
            <path d="M6 6 L21 4 V16 L6 17 Z" fill="#e8f4fa" stroke="#9aa5ac" />
            <path d="M7 14 L10 10 L12 13 L15 7 L17 12 L20 10" fill="none" stroke="#3d94c8" />
            <path d="M10 17 H15 L18 22 H9 Z" fill="#dfe3e6" />
          </svg>
        </RunningButton>
      </Pinned>
      <Tray>
        <Chevron dir="up" color="#fff" size={14} weight={1} />
        <svg width="14" height="14" viewBox="0 0 14 14">
          <rect x="1" y="1" width="11" height="12" fill="#4cc2ff" stroke="#d5efff" />
        </svg>
        <svg width="14" height="16" viewBox="0 0 14 16">
          <path d="M3 2.5 C5 0 8 0 10 2.5 M3 13.5 C5 16 8 16 10 13.5" fill="none" stroke="#fff" />
          <rect x="1.5" y="4.5" width="7" height="7" rx="1.5" fill="none" stroke="#fff" strokeWidth="1.3" />
          <path d="M9 7 L12 5 V11 L9 9" fill="none" stroke="#fff" />
        </svg>
        <svg width="16" height="14" viewBox="0 0 16 14">
          <path d="M5 2.5 H15.5 V9.5 H3.5 V6 M9.5 9.5 V13 M5 13.5 H13 M0.5 0.5 H4.5 V5.5 H0.5 Z M1 3 H4" fill="none" stroke="#fff" />
        </svg>
        <svg width="16" height="14" viewBox="0 0 16 14">
          <path d="M0.5 5 H3 L6.5 1.5 V12.5 L3 9 H0.5 Z M9 5 C10 6 10 8 9 9 M11 3 C13 5 13 9 11 11 M13 1 C16 4 16 10 13 13" fill="none" stroke="#fff" />
        </svg>
      </Tray>
      <Clock>
        <span>10:16 PM</span>
        <span>8/4/2024</span>
      </Clock>
      <BarButton type="button" aria-label="Notifications">
        <svg width="16" height="16" viewBox="0 0 16 16">
          <path d="M0.5 0.5 H15.5 V12.5 H11 L8 15.5 L5 12.5 H0.5 Z" fill="none" stroke="#fff" strokeWidth="1.2" />
        </svg>
      </BarButton>
      <ShowDesktop />
    </Bar>
  );
}

export default function App() {
  return (
    <Screen>
      <GlobalStyle />
      <Icons>
        {desktopItems.map((item) => (
          <DesktopIcon key={item.name}>
            <IconArt>
              {item.icon}
              {item.link && (
                <Badge>
                  <ShortcutArrow />
                </Badge>
              )}
            </IconArt>
            <span>{item.name}</span>
          </DesktopIcon>
        ))}
      </Icons>
      <TaskManager />
      <Explorer />
      <Taskbar />
      <Watermark>
        <span>ANY</span>
        <svg width="60" height="64" viewBox="0 0 60 64">
          <g fill="none" stroke="#fff" strokeWidth="4" strokeLinejoin="round">
            <path d="M16 3 L56 28 L16 54 Z" />
            <path d="M16 16 L36 28 L16 41" strokeWidth="3" />
            <path d="M5 10 V60 L28 47" strokeWidth="3" />
          </g>
        </svg>
        <span>RUN</span>
      </Watermark>
    </Screen>
  );
}

/* ---------- styles ---------- */

const GlobalStyle = createGlobalStyle`
  * {
    box-sizing: border-box;
  }
  body {
    margin: 0;
    font-family: "Open Sans", "Noto Sans", sans-serif;
    font-size: 11px;
    line-height: 16px;
    color: #111;
  }
  button, input {
    font: inherit;
    color: inherit;
    border: none;
    background: none;
    padding: 0;
    margin: 0;
  }
  svg {
    display: block;
    flex: none;
  }
`;

const Screen = styled.div`
  position: relative;
  height: 100vh;
  min-height: 720px;
  overflow: hidden;
  display: flex;
  flex-direction: column;
  justify-content: space-between;
  background:
    linear-gradient(180deg, rgba(0, 110, 225, 0.25) 0%, rgba(0, 150, 240, 0) 35%),
    linear-gradient(90deg, #00b4ff 0%, #00b4ff 20%, #009ff6 40%, #0084e4 60%, #0048be 85%, #003cb4 100%);
`;

const Icons = styled.div`
  display: grid;
  grid-auto-flow: column;
  grid-template-rows: repeat(6, 108px);
  grid-auto-columns: 75px;
`;

const DesktopIcon = styled.div`
  display: flex;
  flex-direction: column;
  align-items: center;
  gap: 3px;
  padding: 7px 7px 0 5px;
  line-height: 15px;
  text-align: center;
  color: #fff;
  text-shadow: 0 1px 2px rgba(0, 40, 90, 0.5);
`;

const IconArt = styled.div`
  position: relative;
  height: 48px;
`;

const Badge = styled.div`
  position: absolute;
  left: 0;
  bottom: 0;
`;

const ExplorerWindow = styled.section`
  position: absolute;
  left: 312px;
  top: 36px;
  right: 182px;
  bottom: 91px;
  display: flex;
  flex-direction: column;
  background: #fff;
  border: 1px solid #dff4ff;
  border-width: 1px 0 0 1px;
`;

const TitleBar = styled.header`
  display: flex;
  align-items: center;
  gap: 8px;
  height: 30px;
  padding: 0 5px 0 7px;
`;

const Divider = styled.i`
  width: 1px;
  height: 12px;
  background: #8a8a8a;
`;

const Title = styled.h1`
  flex: 1;
  margin: 0;
  font-size: 11px;
  font-weight: 400;
`;

const WindowButton = styled.button`
  display: grid;
  place-items: center;
  width: 38px;
  height: 30px;
  &:hover {
    background: #e5e5e5;
  }
`;

const RibbonTabs = styled.nav`
  display: flex;
  height: 25px;
  border-bottom: 1px solid #dadbdc;
`;

const FileTab = styled.button`
  width: 56px;
  height: 24px;
  background: #0063b1;
  color: #fff;
`;

const RibbonTab = styled.button`
  width: 58px;
  height: ${(p) => (p.$active ? "25px" : "24px")};
  padding-bottom: ${(p) => (p.$active ? "2px" : "0")};
  border: ${(p) => (p.$active ? "1px solid #dadbdc" : "none")};
  border-bottom: none;
  background: ${(p) => (p.$active ? "#f5f6f7" : "none")};
  color: #333;
`;

const TabTools = styled.div`
  display: flex;
  align-items: center;
  gap: 8px;
  margin-left: auto;
  padding-right: 4px;
`;

const HelpButton = styled.button`
  width: 16px;
  height: 16px;
  border-radius: 50%;
  background: #0063b1;
  color: #fff;
  font-weight: 700;
`;

const Ribbon = styled.div`
  display: flex;
  height: 91px;
  background: #f5f6f7;
  border-bottom: 1px solid #d5d6d8;
`;

const Group = styled.div`
  display: flex;
  flex-direction: column;
  justify-content: space-between;
  padding: 3px 8px 0 7px;
  border-right: 1px solid #e2e3e4;
`;

const GroupBody = styled.div`
  display: flex;
`;

const GroupLabel = styled.div`
  height: 17px;
  text-align: center;
  color: #444;
`;

const BigCommand = styled.button`
  display: flex;
  flex-direction: column;
  align-items: center;
  width: ${(p) => p.$width}px;
  line-height: 13px;
  color: #6d6d6d;
  > svg {
    margin-top: 4px;
  }
`;

const BigGlyph = styled.span`
  display: grid;
  place-items: center;
  height: 38px;
`;

const CommandColumn = styled.div`
  display: flex;
  flex-direction: column;
  gap: ${(p) => (p.$loose ? "7px" : "0")};
  padding: ${(p) => (p.$loose ? "8px 4px 0 2px" : "0")};
  &:not(:first-child) {
    padding-left: 4px;
  }
  ${(p) => p.$ruled && "&&:not(:first-child) { border-left: 1px solid #e2e3e4; padding-left: 7px; }"}
`;

const SmallCommand = styled.button`
  display: flex;
  align-items: center;
  gap: 3px;
  height: 22px;
  white-space: nowrap;
  color: ${(p) => (p.$on ? "#1e1e1e" : "#6d6d6d")};
`;

const AddressRow = styled.div`
  display: flex;
  align-items: center;
  gap: 12px;
  height: 34px;
  padding: 0 13px 0 12px;
`;

const NavButtons = styled.div`
  display: flex;
  align-items: center;
  gap: 13px;
  margin-right: -6px;
`;

const AddressBox = styled.div`
  display: flex;
  align-items: center;
  gap: 6px;
  flex: 1;
  height: 22px;
  padding-left: 5px;
  border: 1px solid #d9d9d9;
`;

const Crumb = styled.a`
  color: #111;
  text-decoration: none;
`;

const AddressTools = styled.div`
  display: flex;
  align-items: center;
  gap: 2px;
  margin-left: auto;
`;

const RefreshButton = styled.button`
  display: grid;
  place-items: center;
  width: 17px;
  height: 20px;
  border-left: 1px solid #d9d9d9;
`;

const SearchBox = styled.div`
  display: flex;
  align-items: center;
  width: 202px;
  height: 22px;
  padding: 0 8px;
  border: 1px solid #d9d9d9;
`;

const SearchInput = styled.input`
  flex: 1;
  min-width: 0;
  outline: none;
  &::placeholder {
    color: #6d6d6d;
    opacity: 1;
  }
`;

const Body = styled.div`
  display: flex;
  flex: 1;
  min-height: 0;
  padding-top: 1px;
`;

const Tree = styled.div`
  width: 140px;
  overflow: hidden;
`;

const TreeRow = styled.div`
  display: flex;
  align-items: center;
  gap: 5px;
  height: 24px;
  padding-left: ${(p) => (p.$root ? "14px" : "22px")};
  white-space: nowrap;
  background: ${(p) => (p.$active ? "#e5f3ff" : "none")};
`;

const Expander = styled.span`
  width: 13px;
`;

const TreeScroll = styled.div`
  display: flex;
  flex-direction: column;
  align-items: center;
  width: 16px;
  padding: 4px 0;
  background: #f0f0f0;
`;

const TreeThumb = styled.div`
  width: 16px;
  height: 119px;
  margin: auto 0 104px;
  background: #cdcdcd;
`;

const Content = styled.main`
  flex: 1;
  padding: 8px 9px 0 10px;
`;

const SectionHead = styled.div`
  display: flex;
  align-items: center;
  gap: 2px;
  h2 {
    margin: 0;
    font-size: 14px;
    font-weight: 400;
    line-height: 22px;
    color: #1e3287;
  }
  &::after {
    content: "";
    flex: 1;
    height: 1px;
    margin-left: 8px;
    background: #dcdcdc;
  }
`;

const FolderGrid = styled.div`
  display: grid;
  grid-template-columns: repeat(auto-fill, 228px);
  grid-auto-rows: 64px;
  padding: 13px 0 0 35px;
`;

const Folder = styled.div`
  display: flex;
  gap: 6px;
  > svg {
    margin-top: 5px;
  }
`;

const FolderText = styled.div`
  display: flex;
  flex-direction: column;
  small {
    margin-bottom: 1px;
    font-size: 11px;
    color: #6d6d6d;
  }
`;

const StatusBar = styled.footer`
  display: flex;
  justify-content: space-between;
  align-items: center;
  height: 24px;
  padding: 0 9px 0 14px;
  color: #333c50;
`;

const ViewModes = styled.div`
  display: flex;
  align-items: center;
  gap: 6px;
`;

const TaskWindow = styled.section`
  position: absolute;
  left: 768px;
  top: 119px;
  right: 0;
  bottom: 10px;
  display: flex;
  flex-direction: column;
  background: #fff;
`;

const TaskTop = styled.div`
  height: 50px;
  border-bottom: 1px solid #e8e8e8;
`;

const TaskTabs = styled.div`
  display: flex;
  justify-content: flex-end;
  align-items: flex-end;
  height: 25px;
  padding-right: 105px;
  border-bottom: 1px solid #d9d9d9;
`;

const TaskTab = styled.button`
  height: 20px;
  padding: 0 4px 0 6px;
  background: #f0f0f0;
  border: 1px solid #d9d9d9;
  border-bottom: none;
  & + & {
    border-left: none;
  }
`;

const TableArea = styled.div`
  flex: 1;
  min-height: 0;
  margin-top: 14px;
  overflow: hidden;
`;

const ProcessTable = styled.table`
  width: 100%;
  table-layout: fixed;
  border-collapse: separate;
  border-spacing: 0;
  td,
  th {
    padding: 0 6px 0 5px;
    font-weight: 400;
  }
  th {
    height: 43px;
    padding-bottom: 3px;
    vertical-align: bottom;
    text-align: left;
    color: #5a6480;
    border-bottom: 1px solid #a5a5a5;
  }
`;

const CpuHead = styled.th`
  && {
    text-align: right;
    border-left: 1px solid #d5d5d5;
    border-right: 1px solid #d5d5d5;
  }
  strong {
    display: block;
    font-size: 15px;
    font-weight: 400;
    line-height: 24px;
    color: #111;
  }
`;

const ProcessRow = styled.tr`
  height: ${(p) => (p.$group ? "38px" : "28px")};
`;

const StatusCell = styled.td`
  svg {
    margin-left: auto;
  }
`;

const heat = ["#fdf8e2", "#fdf3c5", "#f9ecac"];

const HeatCell = styled.td`
  text-align: right;
  background: ${(p) => heat[p.$level]};
  border-left: 1px solid #e5dcb4;
`;

const ProcessIcon = styled.i`
  display: block;
  width: 16px;
  height: 12px;
  margin-left: 24px;
  border: 1px solid #777;
`;

const TaskScroll = styled.div`
  display: flex;
  align-items: center;
  height: 18px;
  padding-left: 4px;
  background: #f0f0f0;
  border-bottom: 1px solid #a0a0a0;
`;

const TaskThumb = styled.div`
  flex: 1;
  height: 15px;
  margin: 0 61px 0 4px;
  background: #cdcdcd;
`;

const TaskFooter = styled.div`
  height: 48px;
  padding: 14px 8px;
`;

const FewerButton = styled.button`
  display: flex;
  align-items: center;
  gap: 6px;
`;

const Bar = styled.footer`
  position: relative;
  display: flex;
  height: 40px;
  background: rgba(0, 0, 0, 0.86);
  color: #fff;
`;

const BarButton = styled.button`
  display: grid;
  place-items: center;
  width: 48px;
  height: 40px;
  background: ${(p) => (p.$active ? "rgba(255, 255, 255, 0.22)" : "none")};
  box-shadow: ${(p) => (p.$active ? "inset 0 -2px 0 #76b9ed" : "none")};
`;

const RunningButton = styled(BarButton)`
  width: 40px;
  margin-left: 4px;
  box-shadow: inset 0 -2px 0 #76b9ed;
`;

const BarSearch = styled.div`
  display: flex;
  align-items: center;
  gap: 10px;
  width: 288px;
  padding-left: 12px;
  background: #f1f1f1;
  border: 1px solid #c8c8c8;
`;

const BarInput = styled.input`
  flex: 1;
  min-width: 0;
  padding-top: 1px;
  font-size: 14px;
  outline: none;
  &::placeholder {
    color: #2b2b2b;
    opacity: 1;
  }
`;

const Pinned = styled.div`
  display: flex;
  gap: 1px;
  flex: 1;
  padding-left: 3px;
`;

const Tray = styled.div`
  display: flex;
  align-items: center;
  gap: 9px;
  padding-right: 11px;
`;

const Clock = styled.div`
  display: flex;
  flex-direction: column;
  justify-content: center;
  width: 50px;
  margin-right: 3px;
  line-height: 18px;
  text-align: center;
`;

const ShowDesktop = styled.div`
  width: 5px;
  margin-left: 4px;
  border-left: 1px solid #666;
`;

const Watermark = styled.div`
  position: absolute;
  right: 49px;
  bottom: 46px;
  display: flex;
  align-items: center;
  gap: 2px;
  font-family: "Roboto", sans-serif;
  font-size: 34px;
  line-height: 48px;
  font-weight: 300;
  color: #fff;
  opacity: 0.8;
  filter: drop-shadow(0 0 2px rgba(0, 0, 0, 0.4));
  pointer-events: none;
`;
